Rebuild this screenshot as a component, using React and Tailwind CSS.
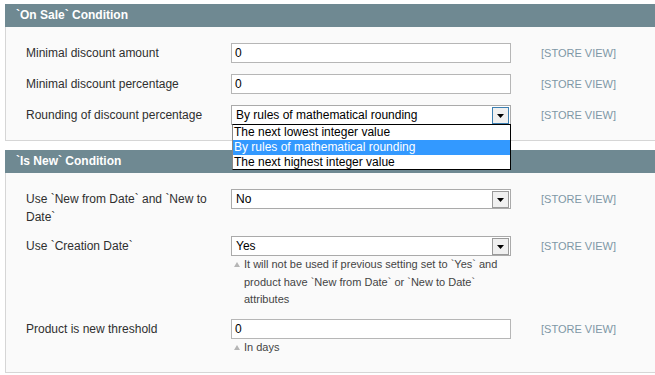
import React from 'react';

const font = { fontFamily: '"Liberation Sans", Arial, sans-serif' };

const StoreView = () => (
  <span className="w-[90px] pl-[30px] text-[11px] leading-[20px] text-[#7e97a6] whitespace-nowrap">[STORE VIEW]</span>
);

const Arrow = ({ focused }) => (
  <span
    className={`absolute right-[1px] top-[1px] w-[17px] h-[17px] flex items-center justify-center bg-[#f0f0f0] border ${
      focused ? 'border-[#3c7fb1]' : 'border-[#9a9a9a]'
    }`}
  >
    <svg width="7" height="4" viewBox="0 0 7 4">
      <path d="M0 0h7L3.5 4z" fill="#000" />
    </svg>
  </span>
);

const Select = ({ value, focused }) => (
  <div className="relative w-[280px] h-[20px] bg-white border border-[#aaa] text-[12px] leading-[18px] pl-[4px] text-black">
    {value}
    <Arrow focused={focused} />
  </div>
);

const Input = ({ value }) => (
  <div className="w-[280px] h-[20px] bg-white border border-[#b6b6b6] text-[12px] leading-[18px] pl-[3px] text-black">
    {value}
  </div>
);

const Note = ({ children }) => (
  <div className="flex text-[11px] leading-[17.5px] text-[#444]">
    <span className="w-[8px] shrink-0 pl-[3px] pt-[6px]">
      <svg width="6" height="5" viewBox="0 0 6 5">
        <path d="M3 0L6 5H0z" fill="#b5b5b5" />
      </svg>
    </span>
    <span className="pl-[5px] w-[272px]">{children}</span>
  </div>
);

const Row = ({ label, children }) => (
  <div className="flex items-start">
    <div className="w-[205px] pr-[10px] text-[12px] leading-[18px] pt-[1px] text-[#2f2f2f]">{label}</div>
    <div className="w-[280px]">{children}</div>
    <StoreView />
  </div>
);

const Header = ({ title }) => (
  <div className="h-[23px] bg-[#6f8992] text-white font-bold text-[12px] leading-[23px] pl-[11px]">{title}</div>
);

export default function App() {
  return (
    <div className="w-[655px] h-[375px] bg-white overflow-hidden pt-[4px] pl-[5px]" style={font}>
      <div className="w-[660px]">
        <Header title="`On Sale` Condition" />
        <div className="bg-[#fafafa] border border-t-0 border-[#d6d6d6] pl-[20px] pt-[16px] pb-[15px] flex flex-col gap-[11px]">
          <Row label="Minimal discount amount">
            <Input value="0" />
          </Row>
          <Row label="Minimal discount percentage">
            <Input value="0" />
          </Row>
          <Row label="Rounding of discount percentage">
            <div className="relative">
              <Select value="By rules of mathematical rounding" focused />
              <div className="absolute z-10 left-[1px] top-[19px] w-[279px] bg-white border border-black border-l-[#888] text-[12px] leading-[15px] text-black">
                <div className="pl-[1px] h-[15px]">The next lowest integer value</div>
                <div className="pl-[1px] h-[15px] bg-[#3399ff] text-white">By rules of mathematical rounding</div>
                <div className="pl-[1px] h-[14px]">The next highest integer value</div>
              </div>
            </div>
          </Row>
        </div>

        <div className="mt-[9px]">
          <Header title="`Is New` Condition" />
          <div className="bg-[#fafafa] border border-t-0 border-[#d6d6d6] pl-[20px] pt-[16px] pb-[16px] flex flex-col gap-[10px]">
            <Row label="Use `New from Date` and `New to Date`">
              <Select value="No" />
            </Row>
            <Row label="Use `Creation Date`">
              <Select value="Yes" />
              <Note>It will not be used if previous setting set to `Yes` and product have `New from Date` or `New to Date` attributes</Note>
            </Row>
            <Row label="Product is new threshold">
              <Input value="0" />
              <Note>In days</Note>
            </Row>
          </div>
        </div>
      </div>
    </div>
  );
}
